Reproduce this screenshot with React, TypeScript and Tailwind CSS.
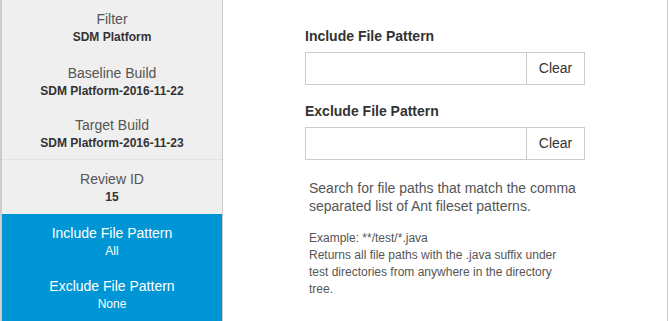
import React from "react";

const items = [
  { label: "Filter", value: "SDM Platform", h: "h-[54px]" },
  { label: "Baseline Build", value: "SDM Platform-2016-11-22", h: "h-[53px]" },
  { label: "Target Build", value: "SDM Platform-2016-11-23", h: "h-[53px]", sep: true },
  { label: "Review ID", value: "15", h: "h-[54px]" },
];

const activeItems = [
  { label: "Include File Pattern", value: "All" },
  { label: "Exclude File Pattern", value: "None" },
];

function PatternField({ title, first }: { title: string; first?: boolean }) {
  return (
    <div className={first ? "" : "mt-[16px]"}>
      <h3 className="text-[14px] leading-[20px] font-bold text-[#333]">{title}</h3>
      <div className="mt-[6px] flex h-[33px] border border-[#ccc]">
        <input className="flex-1 min-w-0 bg-white outline-none px-2 text-[14px]" />
        <button className="w-[58px] border-l border-[#ccc] bg-white text-[14px] text-[#333]">
          Clear
        </button>
      </div>
    </div>
  );
}

export default function App() {
  return (
    <div
      className="w-[669px] h-[321px] flex bg-white overflow-hidden"
      style={{ fontFamily: '"Liberation Sans", Arial, sans-serif' }}
    >
      {/* Sidebar */}
      <div className="w-[223px] flex flex-col border-l-2 border-r border-[#ccc] bg-[#efefef]">
        {items.map((it) => (
          <div
            key={it.label}
            className={`${it.h} flex flex-col items-center justify-center ${it.sep ? "border-b border-[#e3e3e3]" : ""}`}
          >
            <div className="text-[14px] leading-[20px] text-[#555]">{it.label}</div>
            <div className="text-[12px] leading-[16px] font-bold text-[#333]">{it.value}</div>
          </div>
        ))}
        <div className="flex-1 bg-[#0095d5] flex flex-col">
          {activeItems.map((it) => (
            <div key={it.label} className="h-[53px] flex flex-col items-center justify-center text-white">
              <div className="text-[14px] leading-[20px]">{it.label}</div>
              <div className="text-[12px] leading-[16px]">{it.value}</div>
            </div>
          ))}
        </div>
      </div>

      {/* Content */}
      <div className="w-[445px] border-r border-[#ccc] flex justify-center pt-[26px]">
        <div className="w-[280px]">
          <PatternField title="Include File Pattern" first />
          <PatternField title="Exclude File Pattern" />
          <div className="pl-[4px] w-[273px] text-[#555]">
            <p className="mt-[19px] text-[14px] leading-[18px]">
              Search for file paths that match the comma separated list of Ant fileset patterns.
            </p>
            <p className="mt-[15px] text-[12px] leading-[17px]">
              Example: **/test/*.java
              <br />
              Returns all file paths with the .java suffix under test directories from anywhere in
              the directory tree.
            </p>
          </div>
        </div>
      </div>
    </div>
  );
}
